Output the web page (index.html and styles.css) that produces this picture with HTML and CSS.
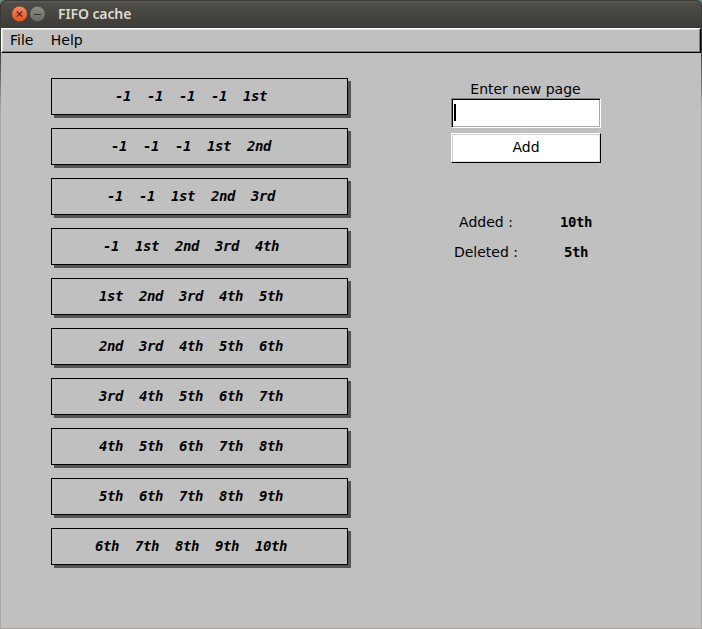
FILE: index.html
```html
<!DOCTYPE html>
<html lang="en">
<head>
<meta charset="utf-8">
<title>FIFO cache</title>
<link rel="stylesheet" href="styles.css">
</head>
<body>
<div class="window">
  <header class="titlebar">
    <svg class="controls" width="38" height="20" viewBox="0 0 38 20">
      <defs>
        <linearGradient id="close" x1="0" y1="0" x2="0" y2="1"><stop offset="0" stop-color="#f58a66"/><stop offset="1" stop-color="#e4501f"/></linearGradient>
        <linearGradient id="min" x1="0" y1="0" x2="0" y2="1"><stop offset="0" stop-color="#8e8c85"/><stop offset="1" stop-color="#696862"/></linearGradient>
      </defs>
      <circle cx="9.5" cy="10" r="7.9" fill="url(#close)" stroke="#45352d" stroke-width=".6"/>
      <path d="M6.8 7.3l5.4 5.4M12.2 7.3l-5.4 5.4" stroke="#4a2015" stroke-width="1.2"/>
      <circle cx="27.5" cy="10" r="7.9" fill="url(#min)" stroke="#33322e" stroke-width=".6"/>
      <path d="M24 10.5h7" stroke="#35342f" stroke-width="1"/>
    </svg>
    <span class="title">FIFO cache</span>
  </header>
  <div class="body">
    <nav class="menubar"><span>File</span><span>Help</span></nav>
    <main class="content">
      <section class="history">
        <div class="frame">-1  -1  -1  -1  1st  </div>
        <div class="frame">-1  -1  -1  1st  2nd  </div>
        <div class="frame">-1  -1  1st  2nd  3rd  </div>
        <div class="frame">-1  1st  2nd  3rd  4th  </div>
        <div class="frame">1st  2nd  3rd  4th  5th  </div>
        <div class="frame">2nd  3rd  4th  5th  6th  </div>
        <div class="frame">3rd  4th  5th  6th  7th  </div>
        <div class="frame">4th  5th  6th  7th  8th  </div>
        <div class="frame">5th  6th  7th  8th  9th  </div>
        <div class="frame">6th  7th  8th  9th  10th  </div>
      </section>
      <section class="panel">
        <div class="label">Enter new page</div>
        <div class="input"><i class="caret"></i></div>
        <div class="button">Add</div>
        <dl class="status">
          <dt>Added :</dt><dd>10th</dd>
          <dt>Deleted :</dt><dd>5th</dd>
        </dl>
      </section>
    </main>
  </div>
</div>
</body>
</html>
```
FILE: styles.css
```css
* { box-sizing: border-box; }
body {
  margin: 0;
  background: #6f8a86;
  color: #000;
  font: 14px/20px "DejaVu Sans", sans-serif;
}
.window {
  display: flex;
  flex-direction: column;
  width: 702px;
  height: 629px;
  overflow: hidden;
  border-radius: 6px 6px 0 0;
  background: linear-gradient(#3c3b37 50px, #aba69f 110px);
}
.titlebar {
  display: flex;
  align-items: center;
  height: 28px;
  padding-left: 10px;
  border: solid #3a3935;
  border-width: 1px 1px 0;
  border-radius: 6px 6px 0 0;
  background: linear-gradient(#5b5a53 0 1px, #4e4d47 2px, #3c3b37);
}
.controls { flex: none; margin: -1px 0 0 -1px; }
.title {
  margin: -1px 0 0 10px;
  color: #dfdbd2;
  font: 600 14px/20px "Noto Sans", sans-serif;
  letter-spacing: -.1px;
}
.body {
  display: flex;
  flex: 1;
  flex-direction: column;
  margin: 0 1px 1px;
  background: #c0c0c0;
}
.menubar {
  display: flex;
  gap: 17.3px;
  height: 25px;
  padding: 1px 0 0 8px;
  border: 1px solid;
  border-color: #fff #000 #000 #fff;
  box-shadow: inset -1px -1px #808080, inset 1px 1px #dfdfdf;
}
.content {
  display: flex;
  gap: 103px;
  padding: 25px 0 0 50px;
}
.history {
  display: flex;
  flex-direction: column;
  gap: 13px;
  width: 297px;
}
.frame {
  height: 37px;
  padding-right: 1px;
  border: 1px solid #000;
  box-shadow: 3px 3px #555;
  font: italic bold 14px/35px "DejaVu Sans Mono", monospace;
  letter-spacing: -.428px;
  text-align: center;
  white-space: pre;
}
.panel { width: 150px; }
.label { height: 20px; padding: 1px 1px 0 0; text-align: center; }
.input {
  height: 30px;
  padding: 4px 2px;
  border: 1px solid;
  border-color: #808080 #fff #fff #808080;
  background: #fff;
  box-shadow: inset 1px 1px #000, inset -1px -1px #a9a9a9;
}
.caret { display: block; width: 2px; height: 17px; margin-top: 1px; background: #000; }
.button {
  height: 30px;
  margin-top: 5px;
  border: 1px solid;
  border-color: #fff #000 #000 #fff;
  box-shadow: inset 1px 1px #d3d3d3, inset -1px -1px #dfdfdf;
  background: #fff;
  line-height: 27px;
  text-align: center;
}
.status {
  display: grid;
  grid-template-columns: 70px 80px;
  grid-auto-rows: 30px;
  margin: 44px 0 0;
  line-height: 30px;
  text-align: center;
}
.status dd {
  margin: 0 -15px 0 15px;
  font: bold 14px/31px "DejaVu Sans Mono", monospace;
  letter-spacing: -.428px;
}
```
